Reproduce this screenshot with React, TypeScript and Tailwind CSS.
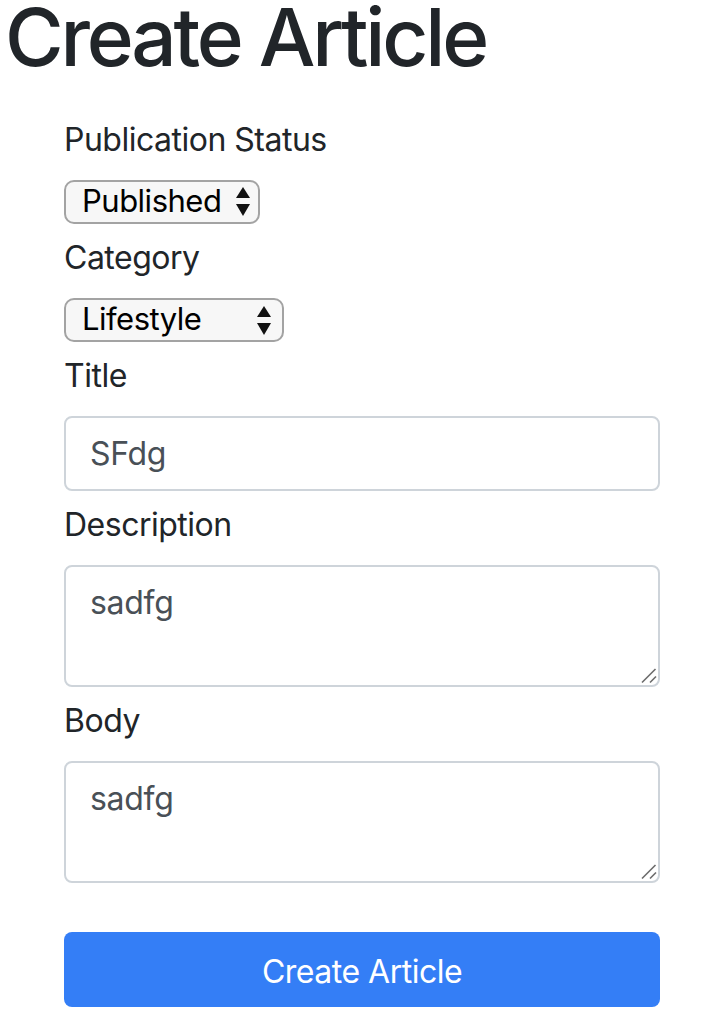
import { useState } from "react";

function SelectArrows() {
    return (
        <svg width="14" height="29" viewBox="0 0 14 29" className="block">
            <polygon points="7,0 14,11 0,11" fill="#111" />
            <polygon points="0,17 14,17 7,29" fill="#111" />
        </svg>
    );
}

function ResizeHandle() {
    return (
        <svg width="16" height="16" viewBox="0 0 16 16" className="absolute right-[3px] bottom-[3px] pointer-events-none">
            <line x1="1" y1="14.5" x2="14.5" y2="1" stroke="#6b6b6b" strokeWidth="1.6" />
            <line x1="9" y1="14.5" x2="15" y2="8.5" stroke="#6b6b6b" strokeWidth="1.6" />
        </svg>
    );
}

export default function App() {
    const [status, setStatus] = useState("Published");
    const [category, setCategory] = useState("Lifestyle");
    const [title, setTitle] = useState("SFdg");
    const [description, setDescription] = useState("sadfg");
    const [body, setBody] = useState("sadfg");

    const labelCls = "block text-[32px] leading-[48px] mb-[16px] tracking-[-0.5px]";
    const selectCls =
        "appearance-none h-[44px] pl-[16px] py-0 pb-[2px] leading-[38px] border-2 border-[#a3a3a3] rounded-[10px] bg-[#f7f7f7] text-[31px] tracking-[-0.5px] text-black font-['Inter',sans-serif] outline-none";
    const fieldCls =
        "w-full border-2 border-[#ced4da] rounded-[8px] bg-white px-[24px] text-[32px] tracking-[-0.3px] text-[#495057] font-['Inter',sans-serif] outline-none";

    return (
        <div className="min-h-screen bg-white text-[#212529] font-['Inter',sans-serif]">
            <h1 className="pl-[5px] text-[80px] leading-[74px] font-medium tracking-[-0.04em]">Create Article</h1>

            <form className="ml-[64px] w-[596px] mt-[42px] flex flex-col" onSubmit={(e) => e.preventDefault()}>
                <label className={labelCls}>Publication Status</label>
                <div className="relative w-[196px]">
                    <select className={`${selectCls} w-[196px]`} value={status} onChange={(e) => setStatus(e.target.value)}>
                        <option>Published</option>
                        <option>Draft</option>
                    </select>
                    <div className="absolute right-[10px] top-[7px] pointer-events-none">
                        <SelectArrows />
                    </div>
                </div>

                <label className={`${labelCls} mt-[10px]`}>Category</label>
                <div className="relative w-[220px]">
                    <select className={`${selectCls} w-[220px]`} value={category} onChange={(e) => setCategory(e.target.value)}>
                        <option>Lifestyle</option>
                        <option>Technology</option>
                    </select>
                    <div className="absolute right-[13px] top-[8px] pointer-events-none">
                        <SelectArrows />
                    </div>
                </div>

                <label className={`${labelCls} mt-[10px]`}>Title</label>
                <input className={`${fieldCls} h-[75px]`} value={title} onChange={(e) => setTitle(e.target.value)} />

                <label className={`${labelCls} mt-[10px]`}>Description</label>
                <div className="relative">
                    <textarea
                        className={`${fieldCls} h-[122px] py-[12px] leading-[48px] resize-none block`}
                        value={description}
                        onChange={(e) => setDescription(e.target.value)}
                    />
                    <ResizeHandle />
                </div>

                <label className={`${labelCls} mt-[10px]`}>Body</label>
                <div className="relative">
                    <textarea
                        className={`${fieldCls} h-[122px] py-[12px] leading-[48px] resize-none block`}
                        value={body}
                        onChange={(e) => setBody(e.target.value)}
                    />
                    <ResizeHandle />
                </div>

                <button
                    type="submit"
                    className="mt-[49px] h-[75px] pt-[4px] w-full rounded-[8px] bg-[#347ef6] text-white text-[32px] tracking-[-0.5px] font-['Inter',sans-serif]"
                >
                    Create Article
                </button>
            </form>
        </div>
    );
}
